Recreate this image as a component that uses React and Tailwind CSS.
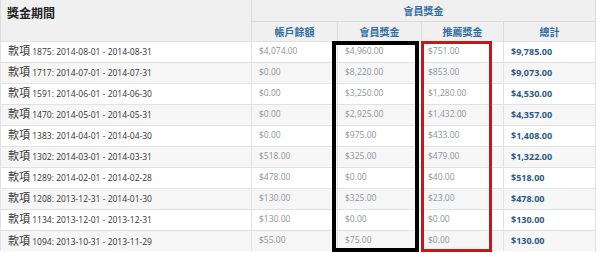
import React from 'react';

const rows = [
  ['1875', '2014-08-01 - 2014-08-31', '$4,074.00', '$4,960.00', '$751.00', '$9,785.00'],
  ['1717', '2014-07-01 - 2014-07-31', '$0.00', '$8,220.00', '$853.00', '$9,073.00'],
  ['1591', '2014-06-01 - 2014-06-30', '$0.00', '$3,250.00', '$1,280.00', '$4,530.00'],
  ['1470', '2014-05-01 - 2014-05-31', '$0.00', '$2,925.00', '$1,432.00', '$4,357.00'],
  ['1383', '2014-04-01 - 2014-04-30', '$0.00', '$975.00', '$433.00', '$1,408.00'],
  ['1302', '2014-03-01 - 2014-03-31', '$518.00', '$325.00', '$479.00', '$1,322.00'],
  ['1289', '2014-02-01 - 2014-02-28', '$478.00', '$0.00', '$40.00', '$518.00'],
  ['1208', '2013-12-31 - 2014-01-30', '$130.00', '$325.00', '$23.00', '$478.00'],
  ['1134', '2013-12-01 - 2013-12-31', '$130.00', '$0.00', '$0.00', '$130.00'],
  ['1094', '2013-10-31 - 2013-11-29', '$55.00', '$75.00', '$0.00', '$130.00'],
];

export default function App() {
  return (
    <div className="relative w-[600px] h-[253px] overflow-hidden bg-white" style={{ fontFamily: '"Open Sans", "Noto Sans CJK TC", sans-serif' }}>
      <table className="w-[595px] table-fixed border-collapse">
        <colgroup>
          <col className="w-[251px]" />
          <col className="w-[86px]" />
          <col className="w-[84px]" />
          <col className="w-[82px]" />
          <col className="w-[92px]" />
        </colgroup>
        <thead>
          <tr className="h-[21px] bg-[#f0f0f0]">
            <th rowSpan={2} className="border-r border-l border-[#dcdcdc] px-[6px] pt-[5px] text-left align-top text-[12px] font-bold text-[#222]">獎金期間</th>
            <th colSpan={4} className="border-r border-b border-[#dcdcdc] pt-[3px] text-center text-[10px] font-bold text-[#2f6da3]">會員獎金</th>
          </tr>
          <tr className="h-[20px] bg-[#f0f0f0]">
            <th className="border-r border-[#dcdcdc] pt-[2px] text-center text-[10px] font-bold text-[#2f6da3]">帳戶餘額</th>
            <th className="border-r border-[#dcdcdc] pt-[2px] text-center text-[10px] font-bold text-[#2f6da3]">會員獎金</th>
            <th className="border-r border-[#dcdcdc] pt-[2px] text-center text-[10px] font-bold text-[#2f6da3]">推薦獎金</th>
            <th className="border-r border-[#dcdcdc] pt-[2px] text-center text-[10px] font-bold text-[#2f6da3]">總計</th>
          </tr>
        </thead>
        <tbody>
          {rows.map((r, i) => (
            <tr key={r[0]} className={i % 2 === 1 ? 'h-[21px] bg-[#f6f6f6]' : 'h-[21px] bg-white'}>
              <td className="border-t border-l border-r border-[#e2e2e2] px-[7px] text-[8.5px] text-[#333] whitespace-nowrap">
                <span className="text-[11px]">款項</span> {r[0]}: {r[1]}
              </td>
              <td className="border-t border-r border-[#e2e2e2] px-[7px] text-[8.5px] text-[#8d959e]">{r[2]}</td>
              <td className="border-t border-r border-[#e2e2e2] px-[7px] text-[8.5px] text-[#8d959e]">{r[3]}</td>
              <td className="border-t border-r border-[#e2e2e2] px-[6px] text-[8.5px] text-[#8d959e]">{r[4]}</td>
              <td className="border-t border-r border-[#e2e2e2] px-[7px] text-[9px] font-bold text-[#2a5a85]">{r[5]}</td>
            </tr>
          ))}
        </tbody>
      </table>
      <div className="absolute left-[332px] top-[41px] w-[87px] h-[211px] border-[4px] border-black" />
      <div className="absolute left-[421px] top-[41px] w-[71px] h-[211px] border-[3px] border-[#c4161c]" />
    </div>
  );
}
